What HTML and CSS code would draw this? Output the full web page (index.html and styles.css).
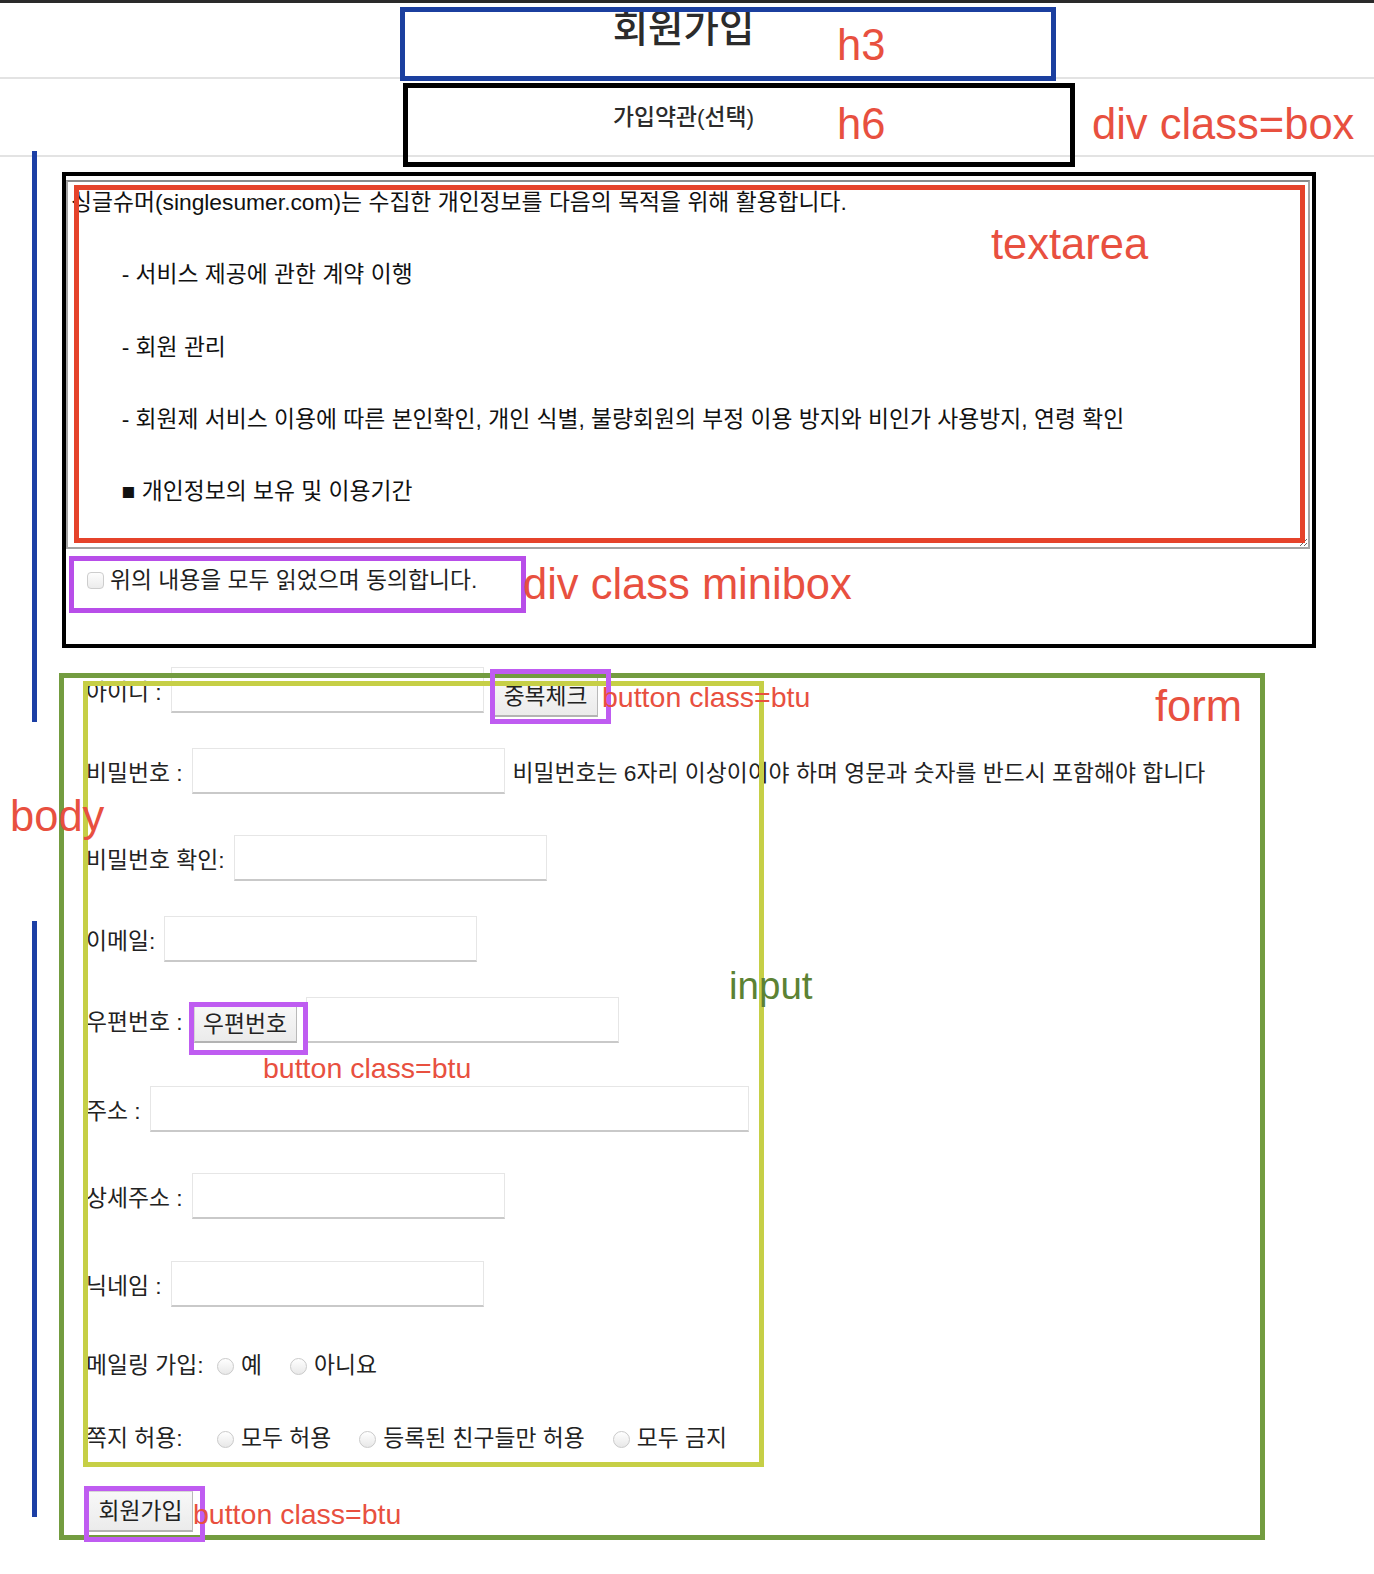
FILE: index.html
```html
<!DOCTYPE html>
<html lang="ko">
<head>
<meta charset="utf-8">
<title>회원가입</title>
<link rel="stylesheet" href="styles.css">
</head>
<body>
<div class="page">
  <div class="topbar"></div>
  <h3 class="title">회원가입</h3>
  <h6 class="subtitle">가입약관(선택)</h6>

  <div class="box">
    <textarea class="terms" readonly>싱글슈머(singlesumer.com)는 수집한 개인정보를 다음의 목적을 위해 활용합니다.

        - 서비스 제공에 관한 계약 이행

        - 회원 관리

        - 회원제 서비스 이용에 따른 본인확인, 개인 식별, 불량회원의 부정 이용 방지와 비인가 사용방지, 연령 확인

        ■ 개인정보의 보유 및 이용기간</textarea>
    <div class="minibox">
      <input type="checkbox" class="check" id="agree">
      <label for="agree">위의 내용을 모두 읽었으며 동의합니다.</label>
    </div>
  </div>

  <form class="join">
    <div class="row">
      <span class="lbl">아이디 :</span>
      <input type="text" class="field">
      <button type="button" class="btu btu-check">중복체크</button>
    </div>
    <div class="row sp-a">
      <span class="lbl">비밀번호 :</span>
      <input type="password" class="field">
      <span class="hint">비밀번호는 6자리 이상이이야 하며 영문과 숫자를 반드시 포함해야 합니다</span>
    </div>
    <div class="row sp-b">
      <span class="lbl">비밀번호 확인:</span>
      <input type="password" class="field">
    </div>
    <div class="row sp-a">
      <span class="lbl">이메일:</span>
      <input type="text" class="field">
    </div>
    <div class="row sp-a">
      <span class="lbl">우편번호 :</span>
      <button type="button" class="btu btu-post">우편번호</button>
      <input type="text" class="field">
    </div>
    <div class="row sp-c">
      <span class="lbl">주소 :</span>
      <input type="text" class="field field-wide">
    </div>
    <div class="row sp-b">
      <span class="lbl">상세주소 :</span>
      <input type="text" class="field">
    </div>
    <div class="row sp-d">
      <span class="lbl">닉네임 :</span>
      <input type="text" class="field">
    </div>
    <div class="opt-row sp-b">
      <span class="lbl opt-lbl">메일링 가입:</span>
      <label class="opt"><input type="radio" class="radio" name="mail">예</label>
      <label class="opt"><input type="radio" class="radio" name="mail">아니요</label>
    </div>
    <div class="opt-row sp-c">
      <span class="lbl opt-lbl">쪽지 허용:</span>
      <label class="opt"><input type="radio" class="radio" name="msg">모두 허용</label>
      <label class="opt"><input type="radio" class="radio" name="msg">등록된 친구들만 허용</label>
      <label class="opt"><input type="radio" class="radio" name="msg">모두 금지</label>
    </div>
    <button type="button" class="btu btu-submit">회원가입</button>
  </form>

  <!-- annotation overlays -->
  <div class="ann frame f-h3"></div>
  <div class="ann frame f-h6"></div>
  <div class="ann frame f-textarea"></div>
  <div class="ann frame f-minibox"></div>
  <div class="ann frame f-form"></div>
  <div class="ann frame f-input"></div>
  <div class="ann frame f-btu1"></div>
  <div class="ann frame f-btu2"></div>
  <div class="ann frame f-btu3"></div>
  <div class="ann body-line l1"></div>
  <div class="ann body-line l2"></div>

  <div class="ann lab t-h3">h3</div>
  <div class="ann lab t-h6">h6</div>
  <div class="ann lab t-box">div class=box</div>
  <div class="ann lab t-textarea">textarea</div>
  <div class="ann lab t-minibox">div class minibox</div>
  <div class="ann lab t-form">form</div>
  <div class="ann lab t-body">body</div>
  <div class="ann lab t-input">input</div>
  <div class="ann lab small t-btu1">button class=btu</div>
  <div class="ann lab small t-btu2">button class=btu</div>
  <div class="ann lab small t-btu3">button class=btu</div>
</div>
</body>
</html>
```

FILE: styles.css
```css
* { box-sizing: border-box; }

body {
  margin: 0;
  background: #fff;
  color: #222;
  font-family: "Liberation Sans", "Noto Sans CJK KR", sans-serif;
  font-size: 22.8px;
}

.page {
  position: relative;
  width: 1374px;
  height: 1574px;
  overflow: hidden;
}

.topbar {
  height: 3px;
  background: #2a2a2a;
}

.title {
  margin: 0;
  height: 76px;
  padding: 6px 7px 0 0;
  border-bottom: 2px solid #e3e3e3;
  text-align: center;
  font-size: 38.5px;
  line-height: 40px;
  font-weight: 500;
  color: #2b2b2b;
}

.subtitle {
  margin: 0;
  height: 78px;
  padding: 23px 7px 0 0;
  border-bottom: 2px solid #e3e3e3;
  text-align: center;
  font-size: 22.8px;
  line-height: 30px;
  font-weight: 500;
  color: #2b2b2b;
}

.box {
  width: 1254px;
  margin: 15px 0 0 62px;
  border: 4px solid #000;
}

.terms {
  display: block;
  width: 1244px;
  height: 369px;
  margin: 4px 0 0 0;
  padding: 2px 3px;
  border: 2px solid #a4a4a4;
  border-top-color: #8a8a8a;
  background: #fff;
  color: #111;
  font-family: inherit;
  font-size: 22.8px;
  line-height: 36.15px;
  resize: both;
  overflow: hidden;
  outline: none;
}

.minibox {
  display: flex;
  align-items: center;
  height: 30px;
  margin: 14px 0 51px;
  padding-left: 21px;
  color: #1e1e1e;
}

.check {
  appearance: none;
  -webkit-appearance: none;
  flex: none;
  width: 17px;
  height: 17px;
  margin: 5px 6px 0 0;
  border: 1px solid #cdcdcd;
  border-radius: 4px;
  background: linear-gradient(#fdfdfd, #ececec);
}

.join {
  margin: 19px 0 0;
  padding-left: 86px;
}

.row {
  display: flex;
  align-items: center;
  height: 46px;
}

.sp-a { margin-top: 35px; }
.sp-b { margin-top: 41px; }
.sp-c { margin-top: 43px; }
.sp-d { margin-top: 42px; }

.lbl {
  flex: none;
  white-space: nowrap;
}

.field {
  flex: none;
  width: 313px;
  height: 46px;
  margin: 0 0 0 9px;
  padding: 0 6px;
  border: 1px solid #e6e6e6;
  border-bottom: 2px solid #c9c9c9;
  background: #fff;
  font: inherit;
  outline: none;
}

.field-wide { width: 599px; }

.hint {
  margin-left: 8px;
  white-space: nowrap;
}

.btu {
  flex: none;
  padding: 0;
  font-family: inherit;
  font-size: 22.8px;
  color: #222;
  background: linear-gradient(#f8f8f8, #ebebeb);
  border: 1px solid #d6d6d6;
  border-right-color: #b9b9b9;
  border-bottom: 2px solid #b3b3b3;
}

.btu-check {
  width: 104px;
  height: 40px;
  margin: 10px 0 0 10px;
  padding-bottom: 10px;
  align-self: flex-start;
}

.btu-post {
  width: 103px;
  height: 38px;
  margin: 8px 0 0 11px;
  padding-bottom: 5px;
  align-self: flex-start;
}

.btu-submit {
  display: block;
  width: 105px;
  height: 41px;
  margin: 40px 0 0 2px;
  padding-bottom: 4px;
}

.opt-row {
  display: flex;
  align-items: center;
  height: 30px;
}

.opt-lbl { width: 131px; }

.opt {
  display: flex;
  align-items: center;
  margin-right: 28px;
  white-space: nowrap;
}

.radio {
  appearance: none;
  -webkit-appearance: none;
  flex: none;
  width: 17px;
  height: 17px;
  margin: 6px 7px 0 0;
  border: 1px solid #cacaca;
  border-radius: 50%;
  background: linear-gradient(#ffffff, #e8e8e8);
}

/* ---------- annotation overlays ---------- */
.ann {
  position: absolute;
  pointer-events: none;
}

.frame { border: 5px solid; }

.f-h3 { left: 400px; top: 7px; width: 656px; height: 74px; border-color: #1b3f9f; }
.f-h6 { left: 403px; top: 83px; width: 672px; height: 84px; border-color: #000; }
.f-textarea { left: 74px; top: 185px; width: 1231px; height: 358px; border-color: #e5432b; }
.f-minibox { left: 69px; top: 556px; width: 457px; height: 57px; border-color: #b84ee9; }
.f-form { left: 59px; top: 673px; width: 1206px; height: 867px; border-color: #739c40; }
.f-input { left: 83px; top: 681px; width: 681px; height: 786px; border-color: #c6cf46; }
.f-btu1 { left: 490px; top: 669px; width: 121px; height: 55px; border-color: #bf5cf1; }
.f-btu2 { left: 189px; top: 1002px; width: 119px; height: 53px; border-color: #bf5cf1; }
.f-btu3 { left: 84px; top: 1486px; width: 121px; height: 56px; border-color: #bf5cf1; }

.body-line { left: 32px; width: 5px; background: #1c3fa5; }
.l1 { top: 151px; height: 571px; }
.l2 { top: 921px; height: 596px; }

.lab {
  font-family: "Liberation Sans", sans-serif;
  font-size: 43.5px;
  line-height: 1;
  white-space: nowrap;
  color: #e8503f;
}

.lab.small { font-size: 28.5px; }

.t-h3 { left: 837px; top: 24px; }
.t-h6 { left: 837px; top: 103px; }
.t-box { left: 1092px; top: 103px; }
.t-textarea { left: 991px; top: 223px; }
.t-minibox { left: 523px; top: 563px; }
.t-form { left: 1155px; top: 685px; }
.t-body { left: 10px; top: 795px; }
.t-input { left: 729px; top: 967px; font-size: 38.5px; color: #5c8234; }
.t-btu1 { left: 602px; top: 683px; }
.t-btu2 { left: 263px; top: 1054px; }
.t-btu3 { left: 193px; top: 1500px; }
```
